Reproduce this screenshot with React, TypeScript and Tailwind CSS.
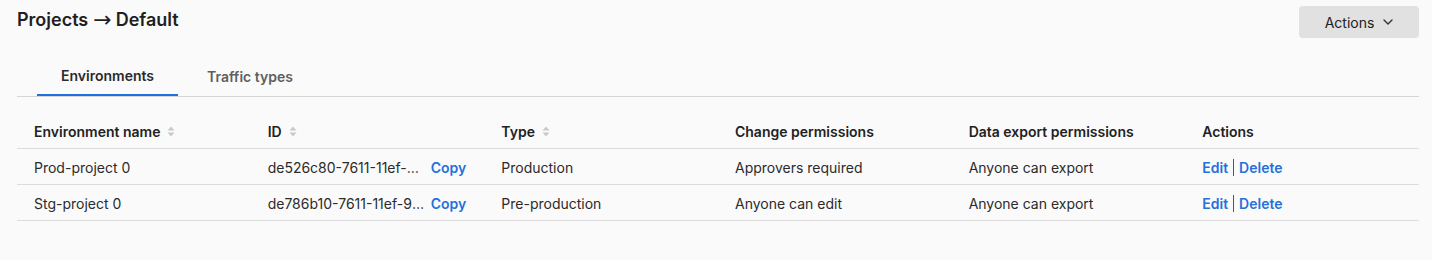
import * as React from "react";

type Row = {
  name: string;
  id: string;
  type: string;
  change: string;
  exportPerm: string;
};

const rows: Row[] = [
  {
    name: "Prod-project 0",
    id: "de526c80-7611-11ef-a1b2-0242ac120002",
    type: "Production",
    change: "Approvers required",
    exportPerm: "Anyone can export",
  },
  {
    name: "Stg-project 0",
    id: "de786b10-7611-11ef-9c3d-0242ac120002",
    type: "Pre-production",
    change: "Anyone can edit",
    exportPerm: "Anyone can export",
  },
];

function SortIcon() {
  return (
    <svg width="8" height="11" viewBox="0 0 8 11" className="ml-[7px] inline-block" aria-hidden="true">
      <path d="M4 0.5 L7.5 4.5 H0.5 Z" fill="#c9c9c9" />
      <path d="M4 10.5 L7.5 6.5 H0.5 Z" fill="#c9c9c9" />
    </svg>
  );
}

function HeaderCell({ children, sortable }: { children: React.ReactNode; sortable?: boolean }) {
  return (
    <th className="h-[36px] pl-[17px] pt-[4px] text-left align-middle font-semibold text-[#222]">
      <span className="inline-flex items-center">
        {children}
        {sortable && <SortIcon />}
      </span>
    </th>
  );
}

export default function App() {
  return (
    <div
      className="h-[260px] w-[1432px] bg-[#fafafa] pl-[17px] pr-[13px] pt-[6px] text-[14px] text-[#2b2b2b]"
      style={{ fontFamily: "Inter, 'Noto Sans', sans-serif" }}
    >
      {/* Title row */}
      <div className="flex items-start justify-between">
        <h1 className="mt-[3px] flex h-[22px] items-center text-[18px] font-semibold leading-[22px] text-[#1f1f1f]">
          Projects
          <span
            className="ml-[5px] mr-[4px] text-[22px] font-normal leading-none"
            style={{ fontFamily: "'DejaVu Sans', sans-serif" }}
          >
            →
          </span>
          Default
        </h1>
        <button
          type="button"
          className="flex h-[32px] w-[120px] items-center justify-center gap-[9px] rounded-[4px] bg-[#e1e1e1] text-[14px] text-[#222]"
        >
          Actions
          <svg width="10" height="6" viewBox="0 0 10 6" aria-hidden="true">
            <path d="M1 1 L5 5 L9 1" fill="none" stroke="#333" strokeWidth="1.4" strokeLinecap="round" strokeLinejoin="round" />
          </svg>
        </button>
      </div>

      {/* Tabs */}
      <div className="mt-[20px] flex border-b border-[#d6d6d6] pl-[20px]">
        <div className="-mb-px flex h-[38px] w-[141px] items-center justify-center border-b-2 border-[#1f6fde] pb-[1px] font-semibold text-[#2a2a2a]">
          Environments
        </div>
        <div className="flex h-[38px] w-[144px] items-center justify-center pb-[1px] font-semibold text-[#5f5f5f]">
          Traffic types
        </div>
      </div>

      {/* Table */}
      <table className="mt-[15px] w-full table-fixed border-collapse">
        <thead>
          <tr className="border-b border-[#dcdcdc]">
            <HeaderCell sortable>Environment name</HeaderCell>
            <HeaderCell sortable>ID</HeaderCell>
            <HeaderCell sortable>Type</HeaderCell>
            <HeaderCell>Change permissions</HeaderCell>
            <HeaderCell>Data export permissions</HeaderCell>
            <HeaderCell>Actions</HeaderCell>
          </tr>
        </thead>
        <tbody>
          {rows.map((r) => (
            <tr key={r.name} className="border-b border-[#dcdcdc]">
              <td className="h-[36px] pl-[17px] pt-[2px] align-middle">{r.name}</td>
              <td className="h-[36px] pl-[17px] pt-[2px] align-middle">
                <div className="flex items-center">
                  <span className="block w-[157px] truncate">{r.id}</span>
                  <button type="button" className="ml-[6px] font-semibold text-[#2670dc]">
                    Copy
                  </button>
                </div>
              </td>
              <td className="h-[36px] pl-[17px] pt-[2px] align-middle">{r.type}</td>
              <td className="h-[36px] pl-[17px] pt-[2px] align-middle">{r.change}</td>
              <td className="h-[36px] pl-[17px] pt-[2px] align-middle">{r.exportPerm}</td>
              <td className="h-[36px] pl-[17px] pt-[2px] align-middle">
                <div className="flex items-center font-semibold text-[#2670dc]">
                  <button type="button">Edit</button>
                  <span className="mx-[5px] h-[17px] w-px bg-[#555]" />
                  <button type="button">Delete</button>
                </div>
              </td>
            </tr>
          ))}
        </tbody>
      </table>
    </div>
  );
}
